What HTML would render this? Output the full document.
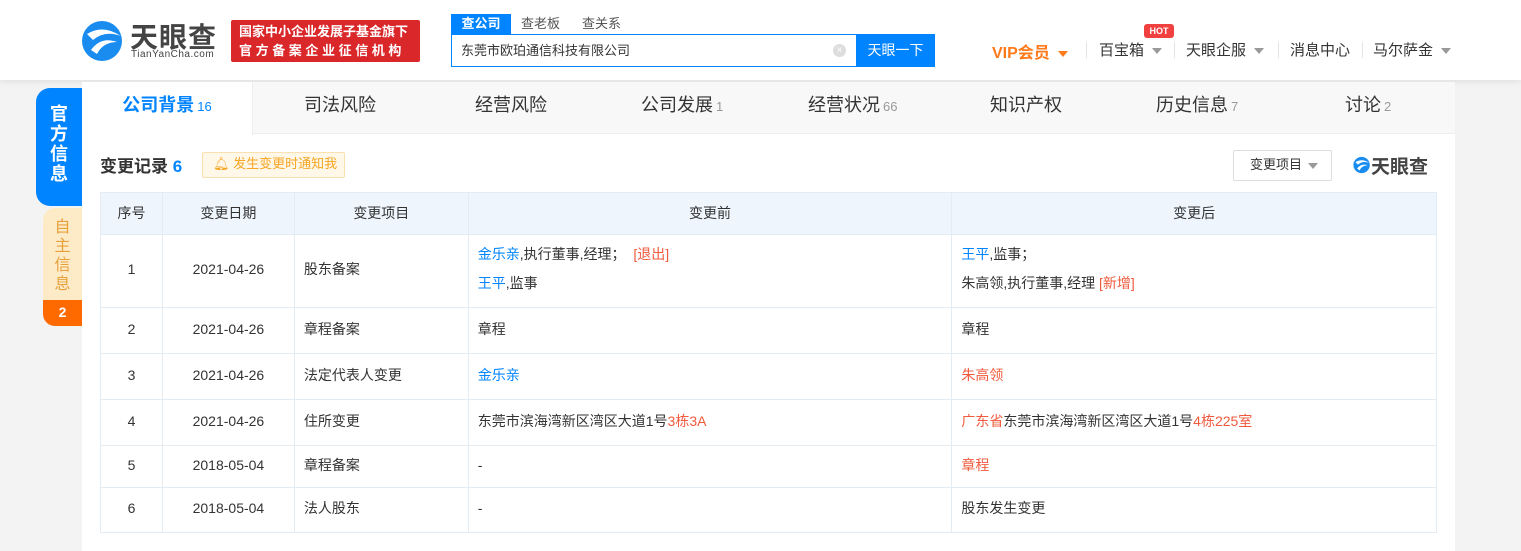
<!DOCTYPE html>
<html><head><meta charset="utf-8"><style>
*{margin:0;padding:0;box-sizing:border-box}
body{width:1521px;height:551px;overflow:hidden;background:#f3f3f3;font-family:"Liberation Sans","Noto Sans CJK SC",sans-serif;color:#333;position:relative}
.hdr{position:absolute;left:0;top:0;width:1521px;height:80px;background:#fff;box-shadow:0 2px 6px rgba(0,0,0,.08)}
.abs{position:absolute}
.blue{color:#0084ff}.red{color:#f05a3c}
.panel{position:absolute;left:82px;top:82px;width:1373px;height:469px;background:#fff}
.tabs{position:absolute;left:0;top:0;width:1373px;height:52px;background:#f8f8f8;border-bottom:1px solid #eee}
.tab{position:absolute;top:0;height:52px;line-height:46px;font-size:18px;color:#333}
.tab small{font-size:13px;color:#999;margin-left:3px}
table{position:absolute;left:100px;top:192px;width:1337px;border-collapse:collapse;font-size:14px}
td,th{border:1px solid #e4ecf3;font-weight:normal;padding:0 9px 4px;vertical-align:middle}
th{background:#eef5fd;height:42px;text-align:center;padding-bottom:2px}
td.c{text-align:center}
.dd{display:inline-block;width:0;height:0;border-left:5px solid transparent;border-right:5px solid transparent;border-top:6px solid #999;vertical-align:middle;margin-left:8px}
</style></head><body>
<div class="hdr">
 <svg class="abs" style="left:81px;top:20px" width="44" height="42" viewBox="0 0 44 42"><circle cx="21" cy="21" r="20" fill="#1a8cf0"/><path d="M6 14 Q22 4 40 16 Q24 10 12 20Z" fill="#fff"/><path d="M10 30 Q20 16 36 22 Q22 22 16 34Z" fill="#fff"/></svg>
 <div class="abs" style="left:130px;top:16px;font-size:28px;font-weight:bold;color:#444;letter-spacing:1px">天眼查</div>
 <div class="abs" style="left:131px;top:49px;font-size:10px;color:#444;letter-spacing:.5px">TianYanCha.com</div>
 <div class="abs" style="left:231px;top:20px;width:189px;height:42px;background:#d9272a;border-radius:2px;color:#fff;font-size:13px;line-height:19px;padding:2px 0 0 8px;font-weight:bold">国家中小企业发展子基金旗下<br><span style="letter-spacing:3.6px">官方备案企业征信机构</span></div>
 <div class="abs" style="left:451px;top:14px;width:60px;height:20px;background:#0084ff;color:#fff;font-size:13px;text-align:center;line-height:20px;font-weight:bold">查公司</div>
 <div class="abs" style="left:521px;top:14px;font-size:13px;color:#555;line-height:20px">查老板</div>
 <div class="abs" style="left:582px;top:14px;font-size:13px;color:#555;line-height:20px">查关系</div>
 <div class="abs" style="left:451px;top:34px;width:406px;height:33px;border:1px solid #0084ff;font-size:13px;line-height:31px;padding-left:9px">东莞市欧珀通信科技有限公司<span style="position:absolute;right:10px;top:9px;width:13px;height:13px;border-radius:50%;background:#ddd;color:#fff;font-size:10px;line-height:13px;text-align:center">×</span></div>
 <div class="abs" style="left:856px;top:34px;width:79px;height:33px;background:#0084ff;color:#fff;font-size:14px;line-height:33px;text-align:center">天眼一下</div>
 <div class="abs" style="left:992px;top:39px;font-size:16px;font-weight:bold;color:#ff7a1a">VIP会员<span class="dd" style="border-top-color:#ff7a1a"></span></div>
 <div class="abs" style="left:1086px;top:42px;width:1px;height:16px;background:#e5e5e5"></div>
 <div class="abs" style="left:1099px;top:39px;font-size:15px">百宝箱<span class="dd"></span></div>
 <div class="abs" style="left:1144px;top:24px;width:30px;height:14px;background:#f04040;border-radius:3px;color:#fff;font-size:9px;font-weight:bold;text-align:center;line-height:14px">HOT</div>
 <div class="abs" style="left:1174px;top:42px;width:1px;height:16px;background:#e5e5e5"></div>
 <div class="abs" style="left:1186px;top:39px;font-size:15px">天眼企服<span class="dd"></span></div>
 <div class="abs" style="left:1278px;top:42px;width:1px;height:16px;background:#e5e5e5"></div>
 <div class="abs" style="left:1290px;top:39px;font-size:15px">消息中心</div>
 <div class="abs" style="left:1362px;top:42px;width:1px;height:16px;background:#e5e5e5"></div>
 <div class="abs" style="left:1373px;top:39px;font-size:15px">马尔萨金<span class="dd"></span></div>
</div>
<div class="abs" style="left:36px;top:88px;width:46px;height:118px;background:#0084ff;border-radius:14px 0 0 14px;color:#fff;font-size:18px;font-weight:bold;text-align:center;line-height:20px;padding-top:16px">官<br>方<br>信<br>息</div>
<div class="abs" style="left:43px;top:208px;width:39px;height:118px;background:#fdebc8;border-radius:12px 0 0 12px;overflow:hidden;color:#e8a03a;font-size:16px;text-align:center;line-height:19px;padding-top:10px">自<br>主<br>信<br>息<div style="position:absolute;left:0;bottom:0;width:39px;height:26px;background:#ff6a00;color:#fff;font-weight:bold;font-size:14px;line-height:24px">2</div></div>
<div class="panel">
 <div class="tabs">
  <div class="tab" style="left:0;width:171px;background:#fff;border-right:1px solid #eee;height:53px;text-align:center;color:#0084ff;font-weight:bold">公司背景<small style="color:#0084ff;font-weight:normal">16</small></div>
  <div class="tab" style="left:222px">司法风险</div>
  <div class="tab" style="left:393px">经营风险</div>
  <div class="tab" style="left:559px">公司发展<small>1</small></div>
  <div class="tab" style="left:726px">经营状况<small>66</small></div>
  <div class="tab" style="left:908px">知识产权</div>
  <div class="tab" style="left:1074px">历史信息<small>7</small></div>
  <div class="tab" style="left:1263px">讨论<small>2</small></div>
 </div>
</div>
<div class="abs" style="left:100px;top:152px;font-size:17px;font-weight:bold">变更记录 <span class="blue">6</span></div>
<div class="abs" style="left:202px;top:152px;width:143px;height:26px;background:#fff7e8;border:1px solid #fbe0b0;border-radius:2px;color:#f5a623;font-size:13px;line-height:22px;padding-left:10px">🔔︎ 发生变更时通知我</div>
<div class="abs" style="left:1233px;top:150px;width:99px;height:31px;border:1px solid #ddd;border-radius:2px;font-size:13px;line-height:27px;padding-left:16px">变更项目<span class="dd" style="margin-left:6px"></span></div>
<svg class="abs" style="left:1353px;top:156px" width="18" height="18" viewBox="0 0 44 42"><circle cx="21" cy="21" r="20" fill="#1a8cf0"/><path d="M6 14 Q22 4 40 16 Q24 10 12 20Z" fill="#fff"/><path d="M10 30 Q20 16 36 22 Q22 22 16 34Z" fill="#fff"/></svg>
<div class="abs" style="left:1371px;top:152px;font-size:19px;font-weight:bold;color:#444">天眼查</div>
<table>
<colgroup><col style="width:62px"><col style="width:132px"><col style="width:174px"><col style="width:484px"><col style="width:485px"></colgroup>
<tr><th>序号</th><th>变更日期</th><th>变更项目</th><th>变更前</th><th>变更后</th></tr>
<tr style="height:73px"><td class="c">1</td><td class="c">2021-04-26</td><td>股东备案</td><td style="line-height:29px"><span class="blue">金乐亲</span>,执行董事,经理；&nbsp; <span class="red">[退出]</span><br><span class="blue">王平</span>,监事</td><td style="line-height:29px"><span class="blue">王平</span>,监事；<br>朱高领,执行董事,经理 <span class="red">[新增]</span></td></tr>
<tr style="height:46px"><td class="c">2</td><td class="c">2021-04-26</td><td>章程备案</td><td>章程</td><td>章程</td></tr>
<tr style="height:46px"><td class="c">3</td><td class="c">2021-04-26</td><td>法定代表人变更</td><td class="blue">金乐亲</td><td class="red">朱高领</td></tr>
<tr style="height:46px"><td class="c">4</td><td class="c">2021-04-26</td><td>住所变更</td><td>东莞市滨海湾新区湾区大道1号<span class="red">3栋3A</span></td><td><span class="red">广东省</span>东莞市滨海湾新区湾区大道1号<span class="red">4栋225室</span></td></tr>
<tr style="height:42px"><td class="c">5</td><td class="c">2018-05-04</td><td>章程备案</td><td>-</td><td class="red">章程</td></tr>
<tr style="height:45px"><td class="c">6</td><td class="c">2018-05-04</td><td>法人股东</td><td>-</td><td>股东发生变更</td></tr>
</table>
</body></html>
